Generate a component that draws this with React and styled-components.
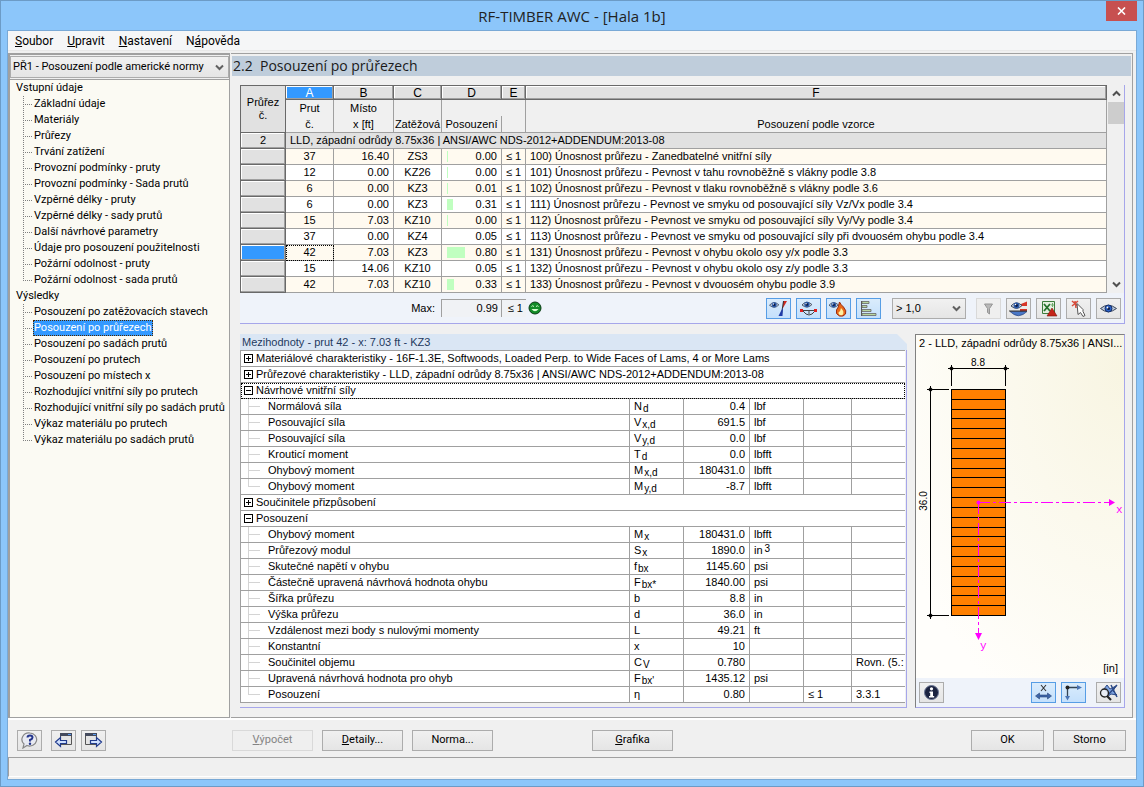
import React from 'react';
import styled, { createGlobalStyle, css } from 'styled-components';

const ui = 'Roboto, "DejaVu Sans Condensed", sans-serif';
const grid = '"Liberation Sans", Arial, sans-serif';
const line = '#a0a0a0';
const lilac = '#a6a6ea';

const GlobalStyle = createGlobalStyle`
  *, *::before, *::after { box-sizing: border-box; }
  body { margin: 0; font: 11px/16px ${ui}; color: #000; }
  button, select { font: inherit; color: inherit; margin: 0; }
  ul { list-style: none; margin: 0; padding: 0; }
  table { border-collapse: separate; border-spacing: 0; table-layout: fixed; width: 100%; }
  th, td { padding: 0; font-weight: normal; }
`;

/* ---------- window frame ---------- */
const Window = styled.div`
  min-height: 100vh;
  display: flex;
  flex-direction: column;
  background: #8cc6fa;
  border: 1px solid #6c9bc6;
  padding: 0 6px 6px;
`;
const TitleBar = styled.header`
  height: 29px;
  flex: none;
  display: grid;
  grid-template-columns: 1fr auto 1fr;
  align-items: center;
`;
const Title = styled.h1`
  grid-column: 2;
  margin: 0;
  font: 15px/24px "Open Sans", "Noto Sans", sans-serif;
  color: #222;
`;
const CloseButton = styled.button`
  justify-self: end;
  align-self: start;
  width: 31px;
  height: 20px;
  padding: 0;
  border: 0;
  background: #c75050;
  display: flex;
  align-items: center;
  justify-content: center;
`;
const Client = styled.div`
  flex: 1;
  display: flex;
  flex-direction: column;
  background: #f0f0f0;
  border: 1px solid #79a9d6;
`;
const MenuBar = styled.nav`
  display: flex;
  gap: 14px;
  height: 20px;
  padding: 0 7px;
  background: #f5f6f7;
  font-size: 12px;
  line-height: 20px;
  border-bottom: 1px solid #e8e8e8;
`;
const MenuItem = styled.a`
  color: #000;
  text-decoration: none;
`;
const Main = styled.main`
  flex: 1;
  display: flex;
  padding: 2px 3px 0 0;
  gap: 1px;
  border-bottom: 2px solid #fff;
`;

/* ---------- navigator ---------- */
const Sidebar = styled.aside`
  flex: none;
  width: 222px;
  display: flex;
  flex-direction: column;
  border: solid ${line};
  border-width: 2px 1px 1px 2px;
`;
const Select = styled.select`
  appearance: none;
  width: ${p => p.$width || '100%'};
  height: ${p => p.$height || '20px'};
  padding: 0 16px 0 ${p => p.$indent || '2px'};
  border: 1px solid #acacac;
  border-radius: 0;
  background:
    url("data:image/svg+xml,%3Csvg xmlns='http://www.w3.org/2000/svg' width='9' height='7'%3E%3Cpath d='M1 1.5l3.5 3.5 3.5-3.5' fill='none' stroke='%23606060' stroke-width='2'/%3E%3C/svg%3E") no-repeat right 4px center,
    linear-gradient(#f1f1f1, #e5e5e5);
`;
const SelectFrame = styled.div`
  padding: 1px 0 1px;
  background: #f0f0f0;
  border-bottom: 1px solid ${line};
`;
const Tree = styled.div`
  flex: 1;
  background: #fbfaf3;
`;
const TreeRoot = styled.div`
  height: 16px;
  padding-left: 6px;
`;
const TreeLeaf = styled.li`
  height: 16px;
  margin-left: 13px;
  padding-left: 10px;
  background:
    repeating-linear-gradient(#808080 0 1px, transparent 1px 2px) 0 0 / 1px 100% no-repeat,
    repeating-linear-gradient(90deg, #808080 0 1px, transparent 1px 2px) 0 8px / 9px 1px no-repeat;
  &:last-child { background-size: 1px 8px, 9px 1px; }
`;
const TreeLink = styled.a`
  display: inline-block;
  padding: 0 1px;
  height: 16px;
  color: #000;
  text-decoration: none;
  white-space: nowrap;
  ${p => p.$active && css`
    background: #3399ff;
    color: #fff;
    outline: 1px dotted #4a2800;
    outline-offset: -1px;
  `}
`;

/* ---------- work area ---------- */
const Work = styled.section`
  flex: 1;
  min-width: 0;
  display: flex;
  flex-direction: column;
  border: solid ${line};
  border-width: 1px 1px 1px 0;
  padding: 2px 1px 0 1px;
`;
const Heading = styled.h2`
  margin: 0 0 9px;
  padding-left: 1px;
  height: 20px;
  background: #bfcddb;
  font: 14px/20px "Open Sans", "Noto Sans", sans-serif;
  color: #1a1a1a;
  white-space: pre;
`;
const Panels = styled.div`
  flex: 1;
  display: flex;
  flex-direction: column;
  gap: 10px;
  padding: 0 6px 9px 8px;
  font-family: ${grid};
`;
const Results = styled.section`
  border: solid ${lilac};
  border-width: 0 1px 1px 0;
`;
const ResultsBody = styled.div`
  display: flex;
`;
const TableWrap = styled.div`
  flex: 1;
  min-width: 0;
`;
const ResultTable = styled.table`
  border-top: 1px solid #696969;
  border-left: 1px solid #696969;
  line-height: 15px;
  white-space: nowrap;
  text-align: center;
`;
const Corner = styled.th`
  height: 47px;
  background: #e1e1e1;
  border: solid #696969;
  border-width: 0 1px 1px 0;
  line-height: 13px;
`;
const Letter = styled.th`
  height: 14px;
  line-height: 12px;
  font-size: 12px;
  border: solid #696969;
  border-width: 0 1px 1px 0;
  box-shadow: inset -1px -1px ${line}, inset 1px 1px #fff;
  background: ${p => (p.$active ? '#3399ff' : '#e1e1e1')};
  color: ${p => (p.$active ? '#fff' : '#000')};
`;
const Caption = styled.th`
  height: 33px;
  vertical-align: bottom;
  background: #f0f0f0;
  border: solid ${line};
  border-width: 0 ${p => (p.$open ? 0 : 1)}px 1px 0;
  line-height: 16px;
  ${p => p.$open && css`
    padding-right: 1px;
    background: linear-gradient(${line}, ${line}) right bottom / 1px 16px no-repeat #f0f0f0;
  `}
`;
const RowHead = styled.th`
  height: 16px;
  line-height: 13px;
  border: solid #696969;
  border-width: 0 1px 1px 0;
  box-shadow: inset -1px -1px ${line}, inset 1px 1px #fff;
  background: ${p => (p.$active ? '#3399ff' : '#e1e1e1')};
`;
const Cell = styled.td`
  height: 16px;
  overflow: hidden;
  border: solid ${line};
  border-width: 0 1px 1px 0;
  text-align: ${p => p.$align || 'center'};
  padding: 0 4px;
  background: ${p => p.$bg || 'transparent'};
  ${p => p.$focus && css`outline: 1px dotted #000; outline-offset: -1px;`}
`;
const Row = styled.tr`
  background: ${p => (p.$odd ? '#fffaf0' : '#fff')};
`;
const Ratio = styled.div`
  display: flex;
  align-items: center;
  justify-content: space-between;
  height: 15px;
  padding-left: 1px;
`;
const Bar = styled.span`
  height: 11px;
  background: #c0ffc0;
`;
const ScrollBar = styled.div`
  width: 16px;
  margin-left: 1px;
  flex: none;
  display: flex;
  flex-direction: column;
  background: #f0f0f0;
`;
const ScrollButton = styled.button`
  height: 17px;
  padding: 0;
  border: 0;
  background: none;
  display: flex;
  align-items: center;
  justify-content: center;
`;
const Thumb = styled.div`
  height: 22px;
  background: #cdcdcd;
`;
const Track = styled.div`
  flex: 1;
`;
const ResultsFoot = styled.div`
  height: 30px;
  display: flex;
  align-items: center;
  background: #eff3fa;
  padding-right: 3px;
`;
const MaxLabel = styled.span`
  width: 201px;
  padding-right: 6px;
  text-align: right;
`;
const MaxBox = styled.output`
  width: ${p => p.$width};
  height: 18px;
  border: solid ${line};
  border-width: 1px 0 0 1px;
  background: #f0f2f5;
  padding: 0 3px;
  line-height: 17px;
  text-align: right;
  white-space: nowrap;
`;
const Smiley = styled.span`
  margin-left: 2px;
  display: flex;
`;
const Tools = styled.div`
  display: flex;
  align-items: center;
  gap: 5px;
  margin-left: auto;
`;
const Spaced = styled.div`
  display: flex;
  padding: 0 5px 0 6px;
`;
const IconButton = styled.button`
  width: 25px;
  height: 21px;
  padding: 0;
  display: flex;
  align-items: center;
  justify-content: center;
  border: 1px solid ${p => (p.$on ? '#569de5' : '#acacac')};
  background: ${p => (p.$on ? 'linear-gradient(#daecfc, #c4e0fc)' : 'linear-gradient(#f0f0f0, #e5e5e5)')};
  &:disabled { border-color: #d9d9d9; background: #efefef; }
`;

/* ---------- lower panels ---------- */
const Lower = styled.div`
  flex: 1;
  display: flex;
  gap: 8px;
`;
const Details = styled.section`
  flex: 1;
  min-width: 0;
  background: linear-gradient(${lilac}, ${lilac}) right 0 top 10px / 1px 100% no-repeat;
  border-bottom: 1px solid ${lilac};
`;
const DetailsTitle = styled.h3`
  margin: 0;
  height: 16px;
  padding-left: 2px;
  font: 11px/16px ${grid};
  color: #1f3a5f;
  background: #dae6f4;
  clip-path: polygon(0 0, calc(100% - 10px) 0, 100% 10px, 100% 100%, 0 100%);
`;
const DetailsBody = styled.div`
  padding-right: 2px;
`;
const DetailTable = styled.table`
  background: #fff;
  border-top: 1px solid ${line};
  border-left: 1px solid ${line};
  white-space: nowrap;
  line-height: 15px;
`;
const DCell = styled.td`
  height: 16px;
  border: solid ${line};
  border-width: 0 ${p => (p.$last ? 0 : 1)}px 1px 0;
  overflow: hidden;
  padding: 0 ${p => (p.$last ? 0 : 4)}px 0 4px;
  text-align: ${p => p.$align || 'left'};
`;
const NameCell = styled(DCell)`
  padding-left: 27px;
  background:
    linear-gradient(#d4d4d4, #d4d4d4) 7px 0 / 1px ${p => (p.$end ? '8px' : '100%')} no-repeat,
    linear-gradient(#d4d4d4, #d4d4d4) 7px 7px / 12px 1px no-repeat;
`;
const GroupCell = styled(DCell)`
  padding: 0 0 0 3px;
  ${p => p.$focus && css`outline: 1px dotted #000; outline-offset: -1px;`}
`;
const GroupLine = styled.div`
  display: flex;
  align-items: center;
  gap: 3px;
  height: 15px;
`;
const Expander = styled.button`
  width: 9px;
  height: 9px;
  padding: 0;
  border: 1px solid #000;
  background:
    linear-gradient(#000, #000) center / 5px 1px no-repeat,
    linear-gradient(#000, #000) center / 1px ${p => (p.$open ? 0 : 5)}px no-repeat,
    #fff;
`;
const Low = styled.sub`
  font-size: 10px;
  line-height: 0;
  vertical-align: -2px;
  margin-left: 1px;
`;
const High = styled.sup`
  font-size: 10px;
  line-height: 0;
  vertical-align: 2px;
  margin-left: 2px;
`;
const Preview = styled.section`
  flex: none;
  width: 210px;
  display: flex;
  flex-direction: column;
  border: 1px solid ${lilac};
  border-top-color: #808080;
  border-left-color: #808080;
`;
const Canvas = styled.div`
  flex: 1;
  background: radial-gradient(ellipse at 100% 10%, #f8f5e2, #fffefb 85%);
`;
const Drawing = styled.svg`
  display: block;
`;
const PreviewTitle = styled.h3`
  margin: 0;
  padding-left: 3px;
  font: 11px/17px ${grid};
  height: 17px;
  white-space: nowrap;
`;
const PreviewTools = styled.div`
  display: flex;
  align-items: center;
  gap: 5px;
  height: 29px;
  padding: 0 3px;
  background: #eff3fa;
`;
const Gap = styled.span`
  width: 0;
`;

/* ---------- bottom ---------- */
const ActionBar = styled.footer`
  display: flex;
  align-items: center;
  height: 37px;
  padding: 3px 10px 0 9px;
`;
const IconGroup = styled.div`
  display: flex;
  gap: 5px;
  margin-right: ${p => p.$after};
`;
const Actions = styled.div`
  display: flex;
  gap: 9px;
  margin-right: ${p => p.$after || 0};
`;
const PushButton = styled.button`
  width: ${p => p.$width || '81px'};
  height: 21px;
  padding: 0;
  border: 1px solid #acacac;
  background: linear-gradient(#f0f0f0, #e5e5e5);
  &:disabled { color: #838383; border-color: #d9d9d9; background: #efefef; }
`;
const Spring = styled.div`
  flex: 1;
`;
const StatusBar = styled.div`
  height: 20px;
  margin-bottom: 2px;
  border-top: 1px solid ${line};
  border-left: 1px solid ${line};
  border-bottom: 1px solid #fff;
`;

/* ---------- icons ---------- */
const Svg = ({ w = 19, h = 17, children }) => (
  <svg width={w} height={h} viewBox={`0 0 ${w} ${h}`} aria-hidden="true">{children}</svg>
);
const Eye = ({ x = 0, y = 0, s = 1 }) => (
  <g transform={`translate(${x} ${y}) scale(${s})`}>
    <path d="M0 5Q5 -1 11 4.500Q6 10 0 5Z" fill="#d5dde8" stroke="#3c4a5e" />
    <circle cx="5.500" cy="4.500" r="3" fill="#2c5aa8" />
    <circle cx="5.500" cy="4.500" r="1.400" fill="#0a1a44" />
    <circle cx="4.500" cy="3.500" r=".8" fill="#fff" />
  </g>
);
const ico = {
  curve: <Svg><Eye x={0.5} y={1} s={0.85} /><path d="M14 1h4L14 8z" fill="#d02a20" /><path d="M14.500 1L12.500 14" stroke="#333" fill="none" /><path d="M14 8L13.500 16H9.500L12 11z" fill="#203ca8" /></Svg>,
  beam: <Svg><Eye x={3} y={0.5} s={0.9} /><path d="M2 10.500H17M4 11q6 8 12 0M10 11v3" stroke="#444" fill="none" /><path d="M1 9h3v3H1zM15 9h3v3h-3z" fill="#e02020" /></Svg>,
  fire: <Svg><Eye x={0} y={1} s={0.85} /><path d="M10.500 2Q12 5 14.500 7Q18 11 16.500 14Q14.500 17 10.500 16Q6 14 7.500 10Q9.500 8 10.500 2Z" fill="#e86818" stroke="#9c2c10" /><path d="M12 8q4 4 1.500 7q-4 1-4-2.500q2-1 2.500-4.500z" fill="#fff0a0" /></Svg>,
  bars: <Svg><path d="M2.500 1V16" stroke="#555" /><path d="M3 1.500h7v2H3zM3 5.500h5v2H3zM3 9.500h9v2H3zM3 13.500h14v2H3z" fill="#b8d8a0" stroke="#666" strokeWidth=".8" /></Svg>,
  funnel: <Svg><path d="M5.500 4h8l-3 4.500V14l-2-1.500V8.500z" fill="#b8b8b8" stroke="#969696" /></Svg>,
  diagram: <Svg><path d="M0 6h6M12 4L18 1.500V6H12zM11 9h7v2l-7 1z" fill="#d83428" /><path d="M1 11.500H18L14 14.500q-5 2.500-9 0z" fill="#4a78c8" stroke="#28427c" strokeWidth=".7" /><path d="M0 11h18" stroke="#333" /><Eye x={2} y={1} /></Svg>,
  excel: <Svg><path d="M3.500 1.500H15.500V13.500H3.500z" fill="#e4efdf" stroke="#3c7c3c" /><path d="M5 4l6 7M11 4l-6 7" stroke="#24702c" strokeWidth="1.800" /><path d="M13.500 3v4M12 5h3" stroke="#6fa86f" /><path d="M13 8l5 8H8z" fill="#c42418" stroke="#80150e" strokeWidth=".6" /></Svg>,
  pick: <Svg><path d="M3 1l6 5M9 1L3 6M6 1l1 7" stroke="#d84c3c" strokeWidth="1.500" /><path d="M8 3.500l6 6v2l2 4-2 1-2.500-4-2.500 2z" fill="#fff" stroke="#555" /></Svg>,
  view: <Svg><path d="M1.500 8.500Q9 2 17.500 8.500Q9 15 1.500 8.500Z" fill="#bfcbdc" stroke="#3b475c" /><circle cx="9.500" cy="8.500" r="3.500" fill="#2b62c8" stroke="#142d66" /><circle cx="9.500" cy="8.500" r="1.500" fill="#0a1a44" /><circle cx="8.500" cy="7.500" r=".9" fill="#fff" /></Svg>,
  info: <Svg><circle cx="9.500" cy="8.500" r="7" fill="#1b2340" stroke="#6b7694" /><circle cx="9.500" cy="4.800" r="1.600" fill="#fff" /><path d="M7.500 7.500h3.500v4.500h1.200v1.500H7v-1.500h1.200V9h-.7z" fill="#fff" /></Svg>,
  dims: <Svg><path d="M7 1l5 6M12 1L7 7" stroke="#333" strokeWidth="1.100" /><path d="M1.500 12l4-3v2h8v-2l4 3-4 3v-2h-8v2z" fill="#3c64a8" stroke="#274679" strokeWidth=".6" /></Svg>,
  axes: <Svg><path d="M3.500 3.500H14M3.500 3.500V13" stroke="#345" strokeWidth="1.300" /><path d="M13 1l5 2.500-5 2.500zM1 12h5l-2.500 4.500z" fill="#4a74b4" /><circle cx="3.500" cy="3.500" r="2" fill="#222" /></Svg>,
  zoom: <Svg><path d="M8 1l3 4 6-3-3 5 4 4-6-1-4 3 1-5-4-3z" fill="#7ea4e0" stroke="#2c4a88" /><path d="M12 1L18 13M18 1L9 11" stroke="#2c4a88" strokeWidth="1.500" /><circle cx="5.500" cy="9" r="4" fill="#e8eef8" fillOpacity=".8" stroke="#222" strokeWidth="1.300" /><path d="M8 12l4 4" stroke="#222" strokeWidth="2.200" /></Svg>,
  help: <Svg><path d="M10 1a7 6.500 0 1 1-3 12.500L3 16l1-4A7 6.500 0 0 1 10 1Z" fill="#e8eaf2" stroke="#888" strokeWidth="1.200" /><path d="M7.500 5.500q0-2 2.500-2t2.500 2q0 1.500-2.500 2.500v1.500" fill="none" stroke="#23348c" strokeWidth="2" /><circle cx="10" cy="11.700" r="1.200" fill="#23348c" /></Svg>,
  prev: <Svg><path d="M6.500 1.500H17.500V12.500H6.500z" fill="#e4e4e4" stroke="#555" /><path d="M6 1h12v3H6z" fill="#444a5c" /><path d="M14 2h3v1h-3z" fill="#5c9cf0" /><path d="M1.500 10L6.500 5.500v3h6v3h-6v3z" fill="#cfe0ff" stroke="#203a8c" strokeWidth="1.200" /></Svg>,
  next: <Svg><path d="M1.500 1.500H12.500V12.500H1.500z" fill="#e4e4e4" stroke="#555" /><path d="M1 1h12v3H1z" fill="#444a5c" /><path d="M9 2h3v1H9z" fill="#5c9cf0" /><path d="M17.500 10L12.500 5.500v3h-6v3h6v3z" fill="#cfe0ff" stroke="#203a8c" strokeWidth="1.200" /></Svg>,
  smile: <Svg w={14} h={14}><circle cx="7" cy="7" r="6" fill="#128c28" stroke="#0a3c14" /><path d="M3.500 5.500q1-1.500 2.500 0M8 5.500q1.500-1.500 2.500 0" fill="none" stroke="#d8ffd0" /><path d="M3.500 8q3.500 4.500 7 0z" fill="#d8ffd0" /></Svg>,
  up: <Svg w={9} h={7}><path d="M1 5.500l3.500-3.500L8 5.500" fill="none" stroke="#505050" strokeWidth="2" /></Svg>,
  down: <Svg w={9} h={7}><path d="M1 1.500l3.500 3.500L8 1.500" fill="none" stroke="#505050" strokeWidth="2" /></Svg>,
  close: <Svg w={9} h={8}><path d="M1 .5l7 7M8 .5l-7 7" stroke="#fff" strokeWidth="1.600" /></Svg>,
};

const Tool = ({ icon, label, on, disabled }) => (
  <IconButton type="button" aria-label={label} $on={on} disabled={disabled}>{ico[icon]}</IconButton>
);

/* ---------- data ---------- */
const inputs = ['Základní údaje', 'Materiály', 'Průřezy', 'Trvání zatížení', 'Provozní podmínky - pruty',
  'Provozní podmínky - Sada prutů', 'Vzpěrné délky - pruty', 'Vzpěrné délky - sady prutů', 'Další návrhové parametry',
  'Údaje pro posouzení použitelnosti', 'Požární odolnost - pruty', 'Požární odolnost - sada prutů'];
const outputs = ['Posouzení po zatěžovacích stavech', 'Posouzení po průřezech', 'Posouzení po sadách prutů',
  'Posouzení po prutech', 'Posouzení po místech x', 'Rozhodující vnitřní síly po prutech',
  'Rozhodující vnitřní síly po sadách prutů', 'Výkaz materiálu po prutech', 'Výkaz materiálu po sadách prutů'];

const results = [
  [37, '16.40', 'ZS3', '0.00', '100) Únosnost průřezu - Zanedbatelné vnitřní síly'],
  [12, '0.00', 'KZ26', '0.00', '101) Únosnost průřezu - Pevnost v tahu rovnoběžně s vlákny podle 3.8'],
  [6, '0.00', 'KZ3', '0.01', '102) Únosnost průřezu - Pevnost v tlaku rovnoběžně s vlákny podle 3.6'],
  [6, '0.00', 'KZ3', '0.31', '111) Únosnost průřezu - Pevnost ve smyku od posouvající síly Vz/Vx podle 3.4'],
  [15, '7.03', 'KZ10', '0.00', '112) Únosnost průřezu - Pevnost ve smyku od posouvající síly Vy/Vy podle 3.4'],
  [37, '0.00', 'KZ4', '0.05', '113) Únosnost průřezu - Pevnost ve smyku od posouvající síly při dvouosém ohybu podle 3.4'],
  [42, '7.03', 'KZ3', '0.80', '131) Únosnost průřezu - Pevnost v ohybu okolo osy y/x podle 3.3'],
  [15, '14.06', 'KZ10', '0.05', '132) Únosnost průřezu - Pevnost v ohybu okolo osy z/y podle 3.3'],
  [42, '7.03', 'KZ10', '0.33', '133) Únosnost průřezu - Pevnost v dvouosém ohybu podle 3.9'],
];
const barWidth = (i, v) => (i === 5 || i === 7 ? 0 : Math.max(1, Math.round(v * 24 - 1)));

const groups = [
  { name: 'Materiálové charakteristiky - 16F-1.3E, Softwoods, Loaded Perp. to Wide Faces of Lams, 4 or More Lams' },
  { name: 'Průřezové charakteristiky - LLD, západní odrůdy 8.75x36 | ANSI/AWC NDS-2012+ADDENDUM:2013-08' },
  {
    name: 'Návrhové vnitřní síly', focus: true, rows: [
      ['Normálová síla', 'N', 'd', '0.4', 'lbf'],
      ['Posouvající síla', 'V', 'x,d', '691.5', 'lbf'],
      ['Posouvající síla', 'V', 'y,d', '0.0', 'lbf'],
      ['Krouticí moment', 'T', 'd', '0.0', 'lbfft'],
      ['Ohybový moment', 'M', 'x,d', '180431.0', 'lbfft'],
      ['Ohybový moment', 'M', 'y,d', '-8.7', 'lbfft'],
    ],
  },
  { name: 'Součinitele přizpůsobení' },
  {
    name: 'Posouzení', rows: [
      ['Ohybový moment', 'M', 'x', '180431.0', 'lbfft'],
      ['Průřezový modul', 'S', 'x', '1890.0', 'in', '3'],
      ['Skutečné napětí v ohybu', 'f', 'bx', '1145.60', 'psi'],
      ['Částečně upravená návrhová hodnota ohybu', 'F', 'bx*', '1840.00', 'psi'],
      ['Šířka průřezu', 'b', '', '8.8', 'in'],
      ['Výška průřezu', 'd', '', '36.0', 'in'],
      ['Vzdálenost mezi body s nulovými momenty', 'L', '', '49.21', 'ft'],
      ['Konstantní', 'x', '', '10', ''],
      ['Součinitel objemu', 'C', 'V', '0.780', '', '', '', 'Rovn. (5.:'],
      ['Upravená návrhová hodnota pro ohyb', 'F', "bx'", '1435.12', 'psi'],
      ['Posouzení', 'η', '', '0.80', '', '', '≤ 1', '3.3.1'],
    ],
  },
];

const Cols = ({ widths }) => (
  <colgroup>{widths.map((w, i) => <col key={i} width={w || undefined} />)}</colgroup>
);

const boards = Array.from({ length: 24 }, (_, i) => Math.round((i * 226) / 23) + 389.5);

const Section = () => (
  <Drawing width="208" height="326" viewBox="916 352 208 326" role="img" aria-label="Průřez">
    <rect x="951.500" y="389.500" width="54" height="226" fill="#ff8000" stroke="#000" />
    {boards.map(y => <path key={y} d={`M951 ${y}h55`} stroke="#000" />)}
    <g stroke="#000" fill="#000">
      <path d="M948 368.500h61M951.500 365v21M1005.500 365v21M930.500 386v233M927 389.500h22M927 615.500h22" fill="none" />
      <circle cx="951.500" cy="368.500" r="1.500" /><circle cx="1005.500" cy="368.500" r="1.500" />
      <circle cx="930.500" cy="389.500" r="1.500" /><circle cx="930.500" cy="615.500" r="1.500" />
    </g>
    <g fontFamily="Liberation Sans, sans-serif" fontSize="10">
      <text x="978" y="366" textAnchor="middle">8.8</text>
      <text x="-501" y="927" textAnchor="middle" transform="rotate(-90)">36.0</text>
      <text x="1118" y="672" fontSize="11" textAnchor="end">[in]</text>
    </g>
    <path d="M978 502.500H1109" stroke="#ff00ff" strokeDasharray="12 3 3 3" />
    <path d="M978.500 502V633" stroke="#ff00ff" strokeDasharray="12 3 3 3" />
    <path d="M1109 499v7l6-3.500zM975 633h7l-3.500 7z" fill="#ff00ff" />
    <circle cx="978.500" cy="502.500" r="2" fill="#ff00ff" />
    <g fontFamily="Liberation Mono, monospace" fontSize="11" fill="#ff00ff">
      <text x="1116" y="513">x</text>
      <text x="980" y="649">y</text>
    </g>
  </Drawing>
);

export default function App() {
  return (
    <Window>
      <GlobalStyle />
      <TitleBar>
        <Title>RF-TIMBER AWC - [Hala 1b]</Title>
        <CloseButton type="button" aria-label="Zavřít">{ico.close}</CloseButton>
      </TitleBar>
      <Client>
        <MenuBar>
          <MenuItem href="#soubor"><u>S</u>oubor</MenuItem>
          <MenuItem href="#upravit"><u>U</u>pravit</MenuItem>
          <MenuItem href="#nastaveni"><u>N</u>astavení</MenuItem>
          <MenuItem href="#napoveda">N<u>á</u>pověda</MenuItem>
        </MenuBar>
        <Main>
          <Sidebar>
            <SelectFrame>
              <Select aria-label="Případ posouzení" $height="22px">
                <option>PŘ1 - Posouzení podle americké normy</option>
              </Select>
            </SelectFrame>
            <Tree>
              <TreeRoot>Vstupní údaje</TreeRoot>
              <ul>
                {inputs.map(t => <TreeLeaf key={t}><TreeLink href="#vstup">{t}</TreeLink></TreeLeaf>)}
              </ul>
              <TreeRoot>Výsledky</TreeRoot>
              <ul>
                {outputs.map((t, i) => (
                  <TreeLeaf key={t}><TreeLink href="#vysledky" $active={i === 1}>{t}</TreeLink></TreeLeaf>
                ))}
              </ul>
            </Tree>
          </Sidebar>
          <Work>
            <Heading>2.2  Posouzení po průřezech</Heading>
            <Panels>
              <Results>
                <ResultsBody>
                  <TableWrap>
                    <ResultTable>
                      <Cols widths={[45, 48, 60, 48, 60, 24, null]} />
                      <thead>
                        <tr>
                          <Corner rowSpan={2}>Průřez<br />č.</Corner>
                          {['A', 'B', 'C', 'D', 'E', 'F'].map((l, i) => <Letter key={l} $active={i === 0}>{l}</Letter>)}
                        </tr>
                        <tr>
                          <Caption>Prut<br />č.</Caption>
                          <Caption>Místo<br />x [ft]</Caption>
                          <Caption>Zatěžová</Caption>
                          <Caption $open>Posouzení</Caption>
                          <Caption />
                          <Caption>Posouzení podle vzorce</Caption>
                        </tr>
                      </thead>
                      <tbody>
                        <tr>
                          <RowHead>2</RowHead>
                          <Cell colSpan={6} $align="left" $bg="#e1e1e1">
                            LLD, západní odrůdy 8.75x36 | ANSI/AWC NDS-2012+ADDENDUM:2013-08
                          </Cell>
                        </tr>
                        {results.map((r, i) => (
                          <Row key={r[4]} $odd={i % 2 === 0}>
                            <RowHead $active={i === 6} />
                            <Cell $focus={i === 6}>{r[0]}</Cell>
                            <Cell $align="right">{r[1]}</Cell>
                            <Cell>{r[2]}</Cell>
                            <Cell $align="right">
                              <Ratio>
                                <Bar style={{ width: barWidth(i, r[3]) }} />
                                {r[3]}
                              </Ratio>
                            </Cell>
                            <Cell>≤ 1</Cell>
                            <Cell $align="left">{r[4]}</Cell>
                          </Row>
                        ))}
                      </tbody>
                    </ResultTable>
                  </TableWrap>
                  <ScrollBar>
                    <ScrollButton type="button" aria-label="Nahoru">{ico.up}</ScrollButton>
                    <Thumb />
                    <Track />
                    <ScrollButton type="button" aria-label="Dolů">{ico.down}</ScrollButton>
                  </ScrollBar>
                </ResultsBody>
                <ResultsFoot>
                  <MaxLabel>Max:</MaxLabel>
                  <MaxBox $width="60px">0.99</MaxBox>
                  <MaxBox $width="25px">≤ 1</MaxBox>
                  <Smiley>{ico.smile}</Smiley>
                  <Tools>
                    <Tool icon="curve" label="Průběhy" on />
                    <Tool icon="beam" label="Pruty" on />
                    <Tool icon="fire" label="Požární odolnost" on />
                    <Tool icon="bars" label="Barevné sloupce" on />
                    <Spaced>
                      <Select aria-label="Filtr využití" $width="74px" $height="21px" $indent="3px">
                        <option>&gt; 1,0</option>
                      </Select>
                    </Spaced>
                    <Tool icon="funnel" label="Filtr" disabled />
                    <Tool icon="diagram" label="Průběhy výsledků" />
                    <Tool icon="excel" label="Export do Excelu" />
                    <Tool icon="pick" label="Vybrat prut" />
                    <Tool icon="view" label="Pohled" />
                  </Tools>
                </ResultsFoot>
              </Results>
              <Lower>
                <Details>
                  <DetailsTitle>Mezihodnoty - prut 42 - x: 7.03 ft - KZ3</DetailsTitle>
                  <DetailsBody>
                    <DetailTable>
                      <Cols widths={[null, 54, 66, 54, 48, 53]} />
                      <tbody>
                        {groups.map(g => (
                          <React.Fragment key={g.name}>
                            <tr>
                              <GroupCell colSpan={6} $last $focus={g.focus}>
                                <GroupLine>
                                  <Expander type="button" $open={!!g.rows} aria-label={g.name} />
                                  {g.name}
                                </GroupLine>
                              </GroupCell>
                            </tr>
                            {(g.rows || []).map((r, i) => (
                              <tr key={i}>
                                <NameCell $end={i === g.rows.length - 1}>{r[0]}</NameCell>
                                <DCell>{r[1]}{r[2] && <Low>{r[2]}</Low>}</DCell>
                                <DCell $align="right">{r[3]}</DCell>
                                <DCell>{r[4]}{r[5] && <High>{r[5]}</High>}</DCell>
                                <DCell>{r[6]}</DCell>
                                <DCell $last>{r[7]}</DCell>
                              </tr>
                            ))}
                          </React.Fragment>
                        ))}
                      </tbody>
                    </DetailTable>
                  </DetailsBody>
                </Details>
                <Preview>
                  <Canvas>
                    <PreviewTitle>2 - LLD, západní odrůdy 8.75x36 | ANSI...</PreviewTitle>
                    <Section />
                  </Canvas>
                  <PreviewTools>
                    <Tool icon="info" label="Informace" />
                    <Spring />
                    <Tool icon="dims" label="Kóty" on />
                    <Tool icon="axes" label="Osy" on />
                    <Gap />
                    <Tool icon="zoom" label="Celý pohled" />
                  </PreviewTools>
                </Preview>
              </Lower>
            </Panels>
          </Work>
        </Main>
        <ActionBar>
          <IconGroup $after="9px"><Tool icon="help" label="Nápověda" /></IconGroup>
          <IconGroup $after="126px">
            <Tool icon="prev" label="Předchozí" />
            <Tool icon="next" label="Další" />
          </IconGroup>
          <Actions $after="99px">
            <PushButton type="button" disabled><u>V</u>ýpočet</PushButton>
            <PushButton type="button"><u>D</u>etaily...</PushButton>
            <PushButton type="button">Norma...</PushButton>
          </Actions>
          <PushButton type="button"><u>G</u>rafika</PushButton>
          <Spring />
          <Actions>
            <PushButton type="button" $width="73px">OK</PushButton>
            <PushButton type="button" $width="73px">Storno</PushButton>
          </Actions>
        </ActionBar>
        <StatusBar />
      </Client>
    </Window>
  );
}
